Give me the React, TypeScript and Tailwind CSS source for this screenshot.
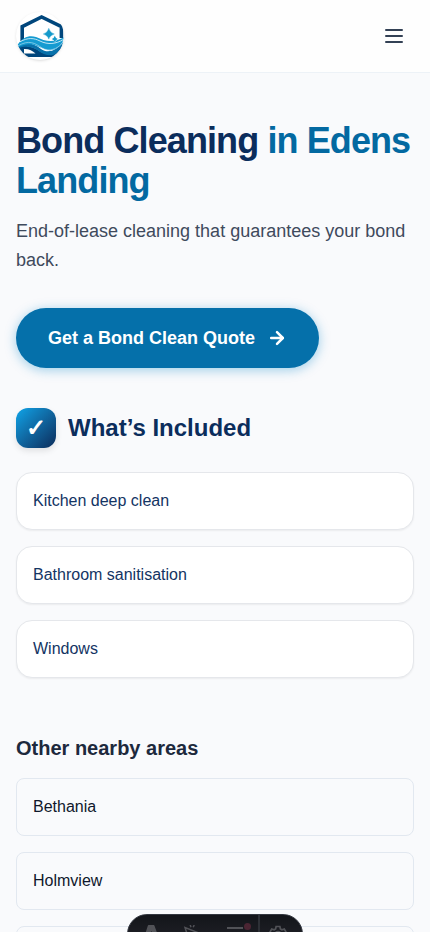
import { ArrowRight } from 'lucide-react';

const included = ['Kitchen deep clean', 'Bathroom sanitisation', 'Windows'];
const nearby = ['Bethania', 'Holmview'];

function Logo() {
  return (
    <div className="h-12 w-12 overflow-hidden rounded-full bg-white shadow-sm">
      <svg viewBox="0 0 48 48" className="h-12 w-12" aria-label="Logo">
        <path d="M6.2 29V14.6L25.6 5 45.4 14.6V26" fill="none" stroke="#00467c" strokeWidth="3.6" />
        <path d="M2.5 34.5C13 33 19 36 25 40C33 43.5 41 40 46.5 33L43 41L38.5 45H8.5L4.5 40Z" fill="#00467c" />
        <path d="M8 37C13 36.8 16.5 38.8 19.5 41.6H8Z" fill="#fff" />
        <path d="M2.5 34C12 30 19 32 25 37C32 42 41 38.5 47.5 29.5C46 36 42 42 36 43.2C30 43.5 26 41.5 22 38.5C16 34.5 9 34 3 36Z" fill="#0871aa" />
        <path d="M1.8 32.5C7 24.5 14 23 20 25C29 29 36 31.5 47.8 25.6C47 33 41 38.5 33.5 38.2C24 37.5 17 27.5 2.5 35Z" fill="#159bd1" />
        <path d="M2 33.8C13 27.5 19 31 26 36C33 40 41 37.5 46.8 30.5" fill="none" stroke="#b9e2f3" strokeWidth="0.6" />
        <path d="M4 29.8C12 25.2 18 26 24 29C32 33 40 32 47.5 27.5" fill="none" stroke="#eaf7fc" strokeWidth="0.8" />
        <path d="M32.8 16.2Q34 20.8 38.4 22Q34 23.2 32.8 27.2Q31.6 23.2 27.2 22Q31.6 20.8 32.8 16.2Z" fill="#149acb" stroke="#149acb" strokeWidth="0.3" />
        <path d="M38.8 23.8Q39.5 26.3 41.8 27Q39.5 27.8 38.8 30.2Q38.1 27.8 35.8 27Q38.1 26.3 38.8 23.8Z" fill="#149acb" stroke="#fff" strokeWidth="0.6" paintOrder="stroke" />
      </svg>
    </div>
  );
}

function DevToolbar() {
  return (
    <div className="fixed top-[914px] left-[127px] flex h-10 w-44 overflow-hidden rounded-full border border-[#343841] bg-linear-to-b from-[#13151a] to-[#25262c] text-[#515257]">
      <div className="flex w-[47px] justify-center pt-[10px]">
        <svg width="18" height="22" viewBox="0 0 18 22" fill="currentColor">
          <path d="M5.6 0h5q.7 0 .9.7L17 16q-3-1.5-5.4-1.5L8.6 5.7 5.6 14.5Q4 14.5 0 16L4.8.7Q5 0 5.6 0Z" />
        </svg>
      </div>
      <div className="flex w-[40px] pt-[10px] pl-[8px]">
        <svg width="22" height="20" viewBox="0 0 22 20" fill="none" stroke="currentColor" strokeWidth="1.5">
          <path d="M7 18 2 2.5 16 8l-5.5 2.5L7 18" />
          <path d="M7.2 0l.8 2.2M11.2 0l-1 2.2" />
        </svg>
      </div>
      <div className="relative w-[43px] pt-[12px] pl-[12px]">
        <div className="h-0.5 w-4 bg-[#515257]" />
        <div className="mt-1.5 h-0.5 w-4 bg-[#515257]" />
        <div className="absolute top-[8px] left-[29px] h-[7px] w-[7px] rounded-full bg-[#4b2533]" />
      </div>
      <div className="flex flex-1 justify-center border-l-2 border-[#2d3036] pt-[10px] pr-[6px]">
        <svg width="20" height="20" viewBox="0 0 20 20" fill="none" stroke="currentColor" strokeWidth="1.7">
          <path d="M8.1 1.5h3.8l.5 2.4 1.5.9 2.4-.8 1.9 3.3-1.9 1.7v2l1.9 1.7-1.9 3.3-2.4-.8-1.5.9-.5 2.4H8.1l-.5-2.4-1.5-.9-2.4.8-1.9-3.3L3.7 11V9L1.8 7.3 3.7 4l2.4.8 1.5-.9Z" />
          <circle cx="10" cy="10" r="3.5" />
        </svg>
      </div>
    </div>
  );
}

export default function App() {
  return (
    <div className="h-[932px] overflow-hidden bg-[#f9fafc] font-['Liberation_Sans',Arial,sans-serif] text-slate-900">
      <header className="flex h-[73px] items-center justify-between border-b border-[#edf2f7] bg-[#fefefe] px-4">
        <Logo />
        <button aria-label="Menu" className="flex h-10 w-10 flex-col items-center justify-center gap-1">
          <span className="h-0.5 w-[18px] rounded-full bg-[#334155]" />
          <span className="h-0.5 w-[18px] rounded-full bg-[#334155]" />
          <span className="h-0.5 w-[18px] rounded-full bg-[#334155]" />
        </button>
      </header>
      <main className="px-4 pt-12">
        <h1 className="text-4xl/10 font-bold tracking-tight text-[#0b2d5c]">
          Bond Cleaning <span className="text-[#0369a1]">in Edens Landing</span>
        </h1>
        <p className="mt-4 text-lg/[29px] text-[#3f4a5c]">End-of-lease cleaning that guarantees your bond back.</p>
        <a className="mt-[33px] flex h-[60px] w-[303px] items-center rounded-full bg-[#0570aa] pl-8 text-lg font-semibold text-white shadow-[0_2px_12px_rgba(2,132,199,0.38)]">
          Get a Bond Clean Quote
          <ArrowRight className="ml-3 h-5 w-5" strokeWidth={3} />
        </a>
        <h2 className="mt-10 flex items-center gap-3 text-2xl font-bold text-[#0b2d5c]">
          <span className="flex h-10 w-10 items-center justify-center rounded-xl bg-linear-to-br from-[#0ea5e9] to-[#0b2d5c] text-white shadow-[0_3px_6px_rgba(0,0,0,0.1)]">✓</span>
          What’s Included
        </h2>
        <ul className="mt-6 grid gap-4">
          {included.map((item) => (
            <li key={item} className="h-[58px] rounded-2xl border border-gray-200 bg-white p-4 text-base text-[#133463] shadow-[0_1px_2px_rgba(0,0,0,0.06)]">{item}</li>
          ))}
        </ul>
        <h3 className="mt-14 text-xl/7 font-semibold text-slate-800">Other nearby areas</h3>
        <ul className="mt-4 grid gap-4">
          {nearby.map((item) => (
            <li key={item} className="h-[58px] rounded-lg border border-slate-200 p-4 text-base">{item}</li>
          ))}
          <li className="h-[58px] rounded-lg border border-slate-200" />
        </ul>
      </main>
      <DevToolbar />
    </div>
  );
}
